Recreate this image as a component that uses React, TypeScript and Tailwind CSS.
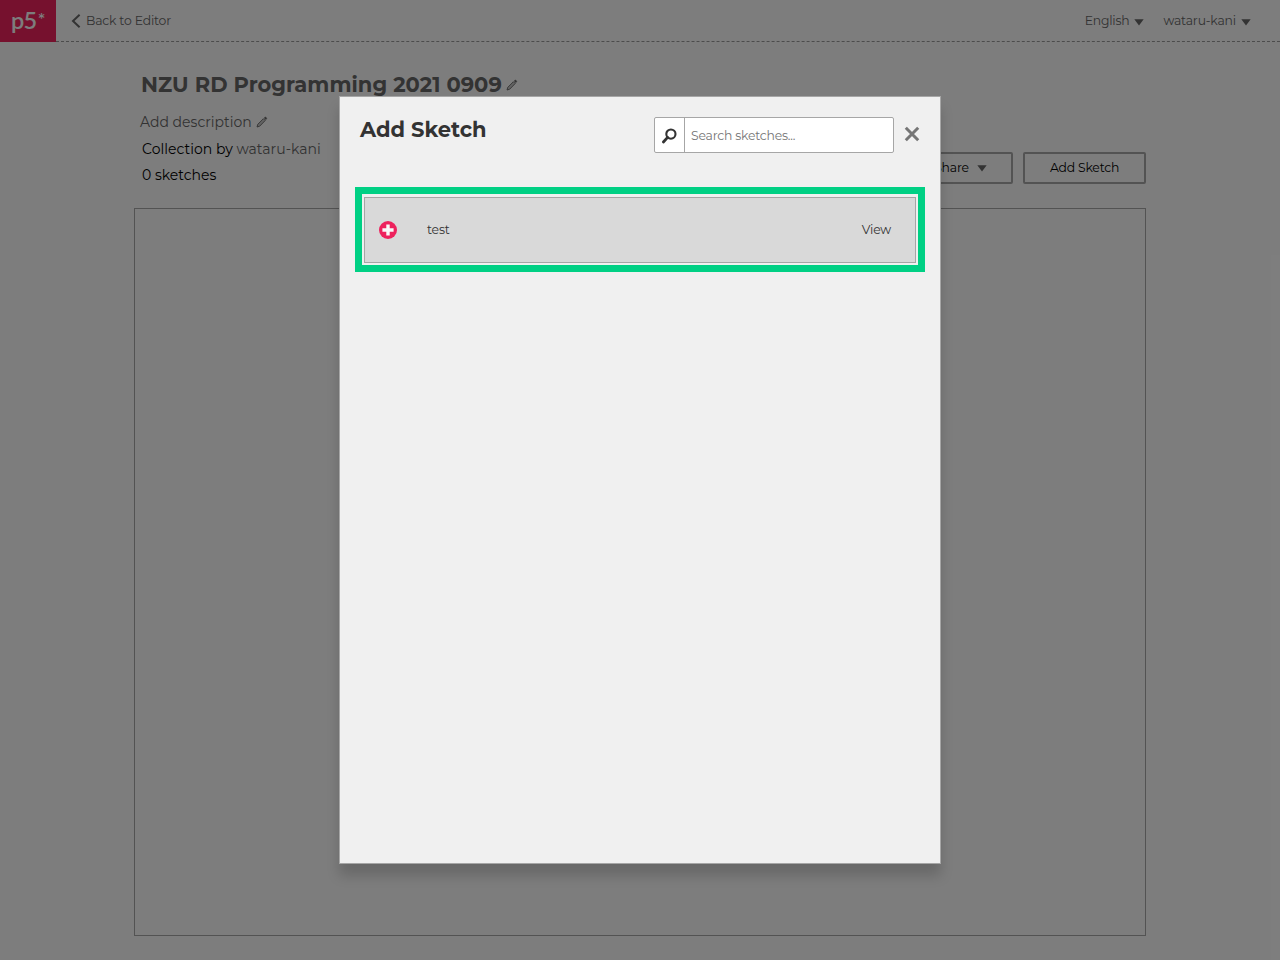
import type { ReactNode } from 'react';

function Caret({ className = '' }: { className?: string }) {
  return (
    <svg viewBox="0 0 10 7" className={`h-[7px] w-[10px] shrink-0 ${className}`} fill="currentColor">
      <path d="M0.3 0.2H9.7L5 6.6Z" />
    </svg>
  );
}

function Pencil({ className = '' }: { className?: string }) {
  return (
    <svg viewBox="0 0 12 12" className={`h-3 w-3 shrink-0 ${className}`} fill="none" stroke="currentColor">
      <path d="M1 11L1.8 8.3L7.4 2.7L9.2 4.5L3.7 10.2Z" fill="currentColor" fillOpacity="0.35" strokeWidth="0.9" />
      <path d="M8.1 2L8.9 1.2Q9.5 0.8 10 1.3L10.6 1.9Q11 2.4 10.6 3L9.9 3.7Z" fill="currentColor" strokeWidth="0.4" />
    </svg>
  );
}

function Header() {
  return (
    <header className="flex h-[42px] text-[12.4px] leading-[15px] tracking-[-0.2px] text-[#666]">
      <div className="flex w-14 shrink-0 justify-center bg-[#ed225d] text-[#fbfbfb]">
        <div className="flex pt-[5px] font-['Lato',sans-serif] text-[23.5px] leading-[30px] font-semibold">
          <span className="tracking-[-0.6px]">p5</span>
          <span className="ml-[1px] text-[18px] leading-[28px]">*</span>
        </div>
      </div>
      <div className="flex flex-1 items-center justify-between border-b border-dashed border-[#999] pr-[30px] pl-[15px]">
        <div className="flex items-center">
          <svg viewBox="0 0 10 14" className="mr-[5px] h-[14px] w-[10px]" fill="none" stroke="currentColor" strokeWidth="2">
            <path d="M8.6 0.8L2 7L8.6 13.2" />
          </svg>
          <span className="tracking-[-0.17px]">Back to Editor</span>
        </div>
        <div className="flex items-center">
          <span>English</span>
          <Caret className="mt-[3px] ml-[5px]" />
          <span className="ml-[19px] tracking-[-0.17px]">wataru-kani</span>
          <Caret className="mt-[3px] mr-[-0.5px] ml-[4.5px]" />
        </div>
      </div>
    </header>
  );
}

function OutlineButton({ children, className }: { children: ReactNode; className: string }) {
  return (
    <button className={`flex h-8 items-center justify-center rounded-[2px] border-2 border-[#a6a6a6] pb-px text-[12.4px] leading-[15px] tracking-[-0.2px] text-black ${className}`}>
      {children}
    </button>
  );
}

function Collection() {
  return (
    <main className="mx-auto flex w-[1012px] flex-1 flex-col pb-6">
      <div className="flex h-[166px] justify-between">
        <div className="pt-[28px] pl-[6px] text-[14px] leading-[18px] text-black">
          <h1 className="ml-px flex h-[30px] items-center text-[21px] font-bold text-[#666]">
            <span className="w-[361px] whitespace-nowrap tracking-[0.03px]">NZU RD Programming 2021 0909</span>
            <Pencil className="ml-[4px]" />
          </h1>
          <p className="mt-[13px] flex items-center text-[#666]">
            <span className="w-[112px] whitespace-nowrap">Add description</span>
            <Pencil className="ml-[4px]" />
          </p>
          <p className="mt-[9px] ml-[2px] tracking-[0.02px]">
            Collection by <span className="text-[#666]">wataru-kani</span>
          </p>
          <p className="mt-[8px] ml-[2px]">0 sketches</p>
        </div>
        <div className="flex gap-[10px] pt-[110px]">
          <OutlineButton className="w-[103px] pr-[2px]">
            <span>Share</span>
            <Caret className="mt-[2px] ml-[8px] text-[#666]" />
          </OutlineButton>
          <OutlineButton className="w-[123px]">
            <span>Add Sketch</span>
          </OutlineButton>
        </div>
      </div>
      <section className="flex-1 border border-[#a6a6a6]" />
    </main>
  );
}

function SketchRow({ name }: { name: string }) {
  return (
    <div className="border-[7px] border-[#00d084] px-[2px] pt-[3px] pb-[2px]">
      <div className="flex h-[66px] items-center border border-[#a6a6a6] bg-[#d9d9d9] pr-[24px] pl-[14px] text-[12.4px] leading-[15px] tracking-[-0.2px] text-[#333]">
        <svg viewBox="0 0 18 18" className="h-[18px] w-[18px]">
          <circle cx="9" cy="9" r="9" fill="#ed225d" />
          <path d="M9 3.4V14.6M3.4 9H14.6" stroke="#f9f9f9" strokeWidth="3.4" />
        </svg>
        <span className="mb-[2px] ml-[30px]">{name}</span>
        <span className="mb-[2px] ml-auto">View</span>
      </div>
    </div>
  );
}

function AddSketchModal() {
  return (
    <div className="h-[768px] w-[602px] border border-[#a6a6a6] bg-[#f0f0f0] shadow-[0_12px_12px_rgba(0,0,0,0.16)]">
      <div className="flex h-[90px] pt-[20px] pr-[20px] pl-[20px]">
        <h2 className="mt-[-1px] text-[21px] leading-[27px] font-bold text-[#333]">Add Sketch</h2>
        <div className="ml-auto flex h-9 w-[240px] rounded-[2px] border border-[#a6a6a6] bg-white">
          <div className="flex w-[30px] items-center justify-center border-r border-[#a6a6a6] pt-px pr-px">
            <svg viewBox="0 0 16 16" className="h-4 w-4" fill="none" stroke="#333">
              <circle cx="9.9" cy="6.1" r="4.6" strokeWidth="2.1" />
              <path d="M6.6 9.4L2.4 14" strokeWidth="2.8" strokeLinecap="round" />
            </svg>
          </div>
          <input
            className="min-w-0 flex-1 px-[6px] pt-[2px] text-[12.4px] tracking-[-0.2px] placeholder:text-[#757575]"
            placeholder="Search sketches..."
          />
        </div>
        <svg viewBox="0 0 16 16" className="mt-[9px] ml-[10px] h-4 w-4" stroke="#757575" strokeWidth="3">
          <path d="M1.8 1.8L14.2 14.2M14.2 1.8L1.8 14.2" />
        </svg>
      </div>
      <div className="px-[15px]">
        <SketchRow name="test" />
      </div>
    </div>
  );
}

export default function App() {
  return (
    <div className="relative flex h-[960px] w-[1280px] flex-col overflow-hidden bg-[#fbfbfb] font-['Montserrat','Inter',sans-serif]">
      <Header />
      <Collection />
      <div className="absolute inset-0 flex items-center justify-center bg-black/50">
        <AddSketchModal />
      </div>
    </div>
  );
}
